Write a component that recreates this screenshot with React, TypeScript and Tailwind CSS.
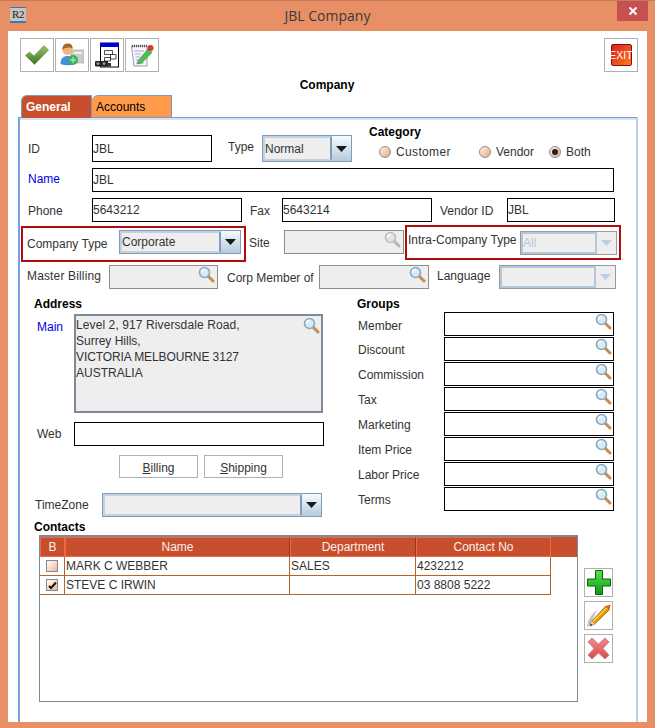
import type { ReactNode } from "react";

function Lens({ gray = false }: { gray?: boolean }) {
  return (
    <svg width="17" height="17" viewBox="0 0 17 17" className="block">
      <path d="M10 10 L15 15" stroke={gray ? "#b5b5b5" : "#c98a4a"} strokeWidth="3" strokeLinecap="round" />
      <circle cx="6.5" cy="6.5" r="5" fill={gray ? "#e4e4e4" : "#d5ebf8"} stroke={gray ? "#bdbdbd" : "#8aa7bb"} strokeWidth="1.6" />
      <path d="M3.5 6.5 A3 3 0 0 1 6.5 3.5" stroke="#fff" strokeWidth="1.3" fill="none" />
    </svg>
  );
}

function Field({ className, children, search }: { className: string; children?: ReactNode; search?: boolean }) {
  return (
    <div className={`relative flex items-center bg-white border border-black leading-none shrink-0 ${className}`}>
      {children}
      {search && (
        <span className="absolute right-px top-0">
          <Lens />
        </span>
      )}
    </div>
  );
}

function GrayField({ className, lens }: { className: string; lens: "gray" | "color" }) {
  return (
    <div className={`relative bg-[#eeeeee] border border-[#8e8e8e] shrink-0 ${className}`}>
      <span className="absolute right-[2px] top-0">
        <Lens gray={lens === "gray"} />
      </span>
    </div>
  );
}

function Combo({ className, text }: { className: string; text?: string }) {
  return (
    <div className={`flex bg-[#eeeeee] border border-[#7f9db9] shrink-0 ${className}`}>
      <div className="flex-1 flex items-center border-2 border-[#c3d2e2] border-r-[#7f9db9] text-[#333333]">{text}</div>
      <div className="w-[19px] flex items-center justify-center bg-gradient-to-b from-[#f7fafc] to-[#b5cbe0]">
        <svg width="11" height="6" viewBox="0 0 11 6">
          <path d="M0 0 H11 L5.5 6 Z" fill="#1a1a1a" />
        </svg>
      </div>
    </div>
  );
}

function DisabledCombo({ className, text }: { className: string; text?: string }) {
  return (
    <div className={`flex bg-[#eeeeee] shrink-0 border border-[#9a9a9a] ${className}`}>
      <div className="flex-1 flex items-center border-2 border-[#b4c8dc] text-[#b4c8e0]">{text}</div>
      <div className="w-[19px] flex items-center justify-center">
        <svg width="11" height="6" viewBox="0 0 11 6">
          <path d="M0 0 H11 L5.5 6 Z" fill="#b8cfe6" />
        </svg>
      </div>
    </div>
  );
}

function Radio({ on }: { on?: boolean }) {
  return (
    <span className="flex items-center justify-center w-[12px] h-[12px] rounded-full border border-[#7f8fa3] bg-gradient-to-br from-[#fdf3ea] to-[#eda673] shrink-0">
      {on && <span className="w-[6px] h-[6px] rounded-full bg-[#222222]" />}
    </span>
  );
}

function ToolButton({ children }: { children: ReactNode }) {
  return <div className="w-[34px] h-[34px] border border-[#b0b0b0] flex items-center justify-center bg-white shrink-0">{children}</div>;
}

function SideButton({ children }: { children: ReactNode }) {
  return <div className="w-[29px] h-[29px] border border-[#b0b0b0] flex items-center justify-center bg-white">{children}</div>;
}

function Check() {
  return (
    <svg width="24" height="20" viewBox="0 0 24 20">
      <defs>
        <linearGradient id="chk" x1="0" y1="0" x2="0" y2="1">
          <stop offset="0" stopColor="#9cc26a" />
          <stop offset="1" stopColor="#3f7424" />
        </linearGradient>
      </defs>
      <path d="M0.5 10.5 L4.5 7 L9 11 L19 0.5 L23.5 5 L9.5 19.5 Z" fill="url(#chk)" stroke="#5f8f3f" strokeWidth="0.6" />
    </svg>
  );
}

function Person() {
  return (
    <svg width="24" height="24" viewBox="0 0 24 24">
      <rect x="11" y="7" width="13" height="13" fill="#c9cfc6" stroke="#9aa098" strokeWidth="0.6" />
      <rect x="14" y="9" width="8" height="2" fill="#eef0ea" />
      <path d="M0.5 21 C0.5 15 4 13 7.5 13 C11 13 14.5 15 14.5 21 Q7.5 23.5 0.5 21 Z" fill="#3f93dc" />
      <circle cx="7.5" cy="7" r="5" fill="#f2b57a" />
      <path d="M2.5 7 C2 1.5 5.5 0.5 8 0.5 C11.5 0.5 13 3 12.5 6 C10.5 4 5.5 4 2.5 7 Z" fill="#a9662a" />
      <circle cx="13" cy="17" r="5" fill="#3fae5f" />
      <path d="M10 17 H16 M13 14 V20" stroke="#9be6b0" strokeWidth="1.4" />
    </svg>
  );
}

function Diagram() {
  return (
    <svg width="24" height="26" viewBox="0 0 24 26">
      <rect x="5.5" y="1" width="18" height="24" fill="#fff" stroke="#000" />
      <rect x="5" y="1" width="19" height="4" fill="#0000e6" />
      <path d="M9.5 8.5 H17.5 V12.5 H9.5 Z M15.5 12.5 H21 V17 H15.5 Z M9.5 15.5 H15.5 V19 H9.5 Z" fill="#fff" stroke="#222" strokeWidth="0.8" />
      <rect x="0" y="19" width="13" height="5.5" rx="1" fill="#1d1d1d" />
      <circle cx="3" cy="21.5" r="1.6" fill="#7f9a7f" />
      <circle cx="9" cy="21.5" r="1.6" fill="#7f9a7f" />
      <rect x="12" y="21" width="4" height="3.5" fill="#333" />
    </svg>
  );
}

function Notepad() {
  return (
    <svg width="24" height="24" viewBox="0 0 24 24">
      <path d="M1.5 3 H17 V23 H4 Z" fill="#f8f6fb" stroke="#8a7fa0" strokeWidth="0.8" />
      <path d="M2 3 H17" stroke="#555" strokeWidth="2.4" strokeDasharray="1 1" />
      <path d="M4.5 8 H14 M5 11 H11 M5.5 14 H10 M6 17 H10 M6 20 H14" stroke="#a9a6d8" strokeWidth="1" />
      <path d="M8 18 L18 6 L22 9.5 L11.5 20 L7.5 21 Z" fill="#4cc04a" stroke="#2f7d30" strokeWidth="0.6" />
      <circle cx="20.5" cy="5" r="3" fill="#d9363a" />
    </svg>
  );
}

function Exit() {
  return (
    <div className="w-[21px] h-[22px] rounded-[2px] border border-[#8c0c0c] bg-gradient-to-br from-[#d9231a] via-[#ee4a1d] to-[#fb7c1e] flex items-center justify-center text-white text-[10.5px] leading-none">
      EXIT
    </div>
  );
}

function Plus() {
  return (
    <svg width="24" height="25" viewBox="0 0 24 25">
      <defs>
        <linearGradient id="pls" x1="0" y1="0" x2="0" y2="1">
          <stop offset="0" stopColor="#5fe04d" />
          <stop offset="1" stopColor="#0a9a12" />
        </linearGradient>
      </defs>
      <path d="M8.5 0.5 H15.5 V9 H23.5 V16 H15.5 V24.5 H8.5 V16 H0.5 V9 H8.5 Z" fill="url(#pls)" stroke="#05640c" />
    </svg>
  );
}

function Pencil() {
  return (
    <svg width="25" height="25" viewBox="0 0 25 25">
      <path d="M1 24 C1 17 6 11 11 7 L4 22 Z" fill="#c4c4c4" />
      <path d="M4 23 L5.5 18.5 L20 3 L23.5 6.5 L8.5 21 Z" fill="#f59a00" stroke="#8f5a06" strokeWidth="0.9" />
      <path d="M7 18.5 L20.5 4.8" stroke="#ffd75a" strokeWidth="1.2" />
      <path d="M20 3 L23.5 6.5 L24.5 1.5 Z" fill="#e8562a" />
      <path d="M4 23 L5.5 18.5 L8.5 21 Z" fill="#f7dfba" />
      <path d="M4 23 L4.8 20.5 L6.5 22 Z" fill="#333" />
    </svg>
  );
}

function Cross() {
  return (
    <svg width="23" height="23" viewBox="0 0 23 23">
      <defs>
        <linearGradient id="crs" x1="0" y1="0" x2="0" y2="1">
          <stop offset="0" stopColor="#f28b8f" />
          <stop offset="1" stopColor="#e0444c" />
        </linearGradient>
      </defs>
      <path d="M5 1 L11.5 7 L18 1 L22 5 L16 11.5 L22 18 L18 22 L11.5 16 L5 22 L1 18 L7 11.5 L1 5 Z" fill="url(#crs)" stroke="#b8888a" strokeLinejoin="round" />
    </svg>
  );
}

function Box({ checked }: { checked?: boolean }) {
  return (
    <span className="flex items-center justify-center w-[12px] h-[12px] mx-auto border border-[#7f8a99] bg-gradient-to-br from-[#ffffff] to-[#f0b48c]">
      {checked && (
        <svg width="9" height="9" viewBox="0 0 9 9">
          <path d="M1 5 L3 7 L8 1.5" stroke="#111" strokeWidth="2" fill="none" />
        </svg>
      )}
    </span>
  );
}

const GROUPS = ["Member", "Discount", "Commission", "Tax", "Marketing", "Item Price", "Labor Price", "Terms"];

const CONTACTS = [
  { name: "MARK C WEBBER", dept: "SALES", phone: "4232212", checked: false },
  { name: "STEVE C IRWIN", dept: "", phone: "03 8808 5222", checked: true },
];

export default function App() {
  return (
    <div className="w-[655px] h-[728px] flex flex-col overflow-hidden bg-[#e98f66] border-t border-[#c27a5a] text-[12px] leading-[14px] text-[#333333] [font-family:'Liberation_Sans',Arial,sans-serif]">
      {/* Title bar */}
      <div className="h-[30px] shrink-0 grid grid-cols-[1fr_auto_1fr] items-start">
        <div className="pl-[10px] pt-[6px]">
          <div className="w-[16px] h-[16px] bg-[#c4c4c4] border-t border-b-2 border-[#3f76b8] text-[11px] leading-[13px] text-[#222222] text-center tracking-[-0.5px] [font-family:'Liberation_Serif',serif]">
            R2
          </div>
        </div>
        <div className="pt-[5px] text-[14px] leading-[20px] text-[#3a3a3a] [font-family:'Open_Sans',sans-serif]">JBL Company</div>
        <div className="flex justify-end pr-[7px]">
          <div className="w-[31px] h-[20px] bg-[#c75050] flex items-center justify-center">
            <svg width="10" height="10" viewBox="0 0 10 10">
              <path d="M1.5 1.5 L8.5 8.5 M8.5 1.5 L1.5 8.5" stroke="#fff" strokeWidth="2" />
            </svg>
          </div>
        </div>
      </div>

      {/* Window body */}
      <div className="flex-1 mx-[8px] mb-[6px] bg-white flex flex-col min-h-0 overflow-hidden">
        <div className="flex justify-between pl-[12px] pr-[9px] pt-[7px]">
          <div className="flex gap-px">
            <ToolButton><Check /></ToolButton>
            <ToolButton><Person /></ToolButton>
            <ToolButton><Diagram /></ToolButton>
            <ToolButton><Notepad /></ToolButton>
          </div>
          <ToolButton><Exit /></ToolButton>
        </div>

        <div className="mt-[6px] text-center font-bold text-black pr-[1px]">Company</div>

        {/* Tabs */}
        <div className="flex pl-[13px] mt-[3px] h-[22px] relative z-10">
          <div className="w-[71px] h-[23px] pl-[4px] pt-[4px] bg-[#c74f2d] border-t border-l border-r border-[#7c9ac6] rounded-tl-[6px] font-bold text-white">General</div>
          <div className="w-[80px] h-[22px] pl-[4px] pt-[4px] bg-[#ff9a4b] border-t border-r border-[#7c9ac6] rounded-tl-[6px] text-black">Accounts</div>
        </div>

        {/* Tab panel */}
        <div className="flex-1 ml-[10px] mr-[9px] flex flex-col border-l-2 border-r-[2px] border-l-[#7aa0e0] border-r-[#bad0e8] border-t border-t-[#7c9ac6] min-h-0">
          <div className="flex-1 border-t-[2px] border-[#d5e4f4] pt-[5px]">
            {/* ID / Type / Category */}
            <div className="flex items-start h-[37px] pl-[8px]">
              <div className="w-[64px] mt-[17px]">ID</div>
              <Field className="w-[120px] h-[27px] mt-[10px]">JBL</Field>
              <div className="w-[34px] ml-[16px] mt-[15px]">Type</div>
              <Combo className="w-[90px] h-[27px] mt-[10px]" text="Normal" />
              <div className="ml-[17px] flex flex-col">
                <div className="font-bold text-black">Category</div>
                <div className="flex items-center mt-[6px] pl-[10px]">
                  <Radio />
                  <span className="ml-[5px] w-[83px] tracking-[0.35px]">Customer</span>
                  <Radio />
                  <span className="ml-[5px] w-[53px]">Vendor</span>
                  <Radio on />
                  <span className="ml-[5px]">Both</span>
                </div>
              </div>
            </div>

            {/* Name */}
            <div className="flex items-center h-[24px] pl-[8px] mt-[6px]">
              <div className="w-[64px] text-[#0000e6] -mt-[2px]">Name</div>
              <Field className="w-[522px] h-[24px]">JBL</Field>
            </div>

            {/* Phone / Fax / Vendor */}
            <div className="flex items-center h-[24px] pl-[8px] mt-[6px]">
              <div className="w-[64px] mt-[2px]">Phone</div>
              <Field className="w-[150px] h-[24px]">5643212</Field>
              <div className="w-[32px] ml-[8px] mt-[2px]">Fax</div>
              <Field className="w-[150px] h-[24px]">5643214</Field>
              <div className="w-[67px] ml-[8px] mt-[2px]">Vendor ID</div>
              <Field className="w-[108px] h-[24px]">JBL</Field>
            </div>

            {/* Company type row */}
            <div className="flex items-start pl-px mt-[3px] h-[36px]">
              <div className="w-[225px] h-[36px] mt-px border-2 border-[#b00e0e] flex items-start pl-[4px] pt-[2px]">
                <span className="w-[92px] mt-[7px]">Company Type</span>
                <Combo className="w-[122px] h-[24px]" text="Corporate" />
              </div>
              <div className="w-[35px] ml-[3px] mt-[11px]">Site</div>
              <GrayField className="w-[120px] h-[24px] mt-[5px]" lens="gray" />
              <div className="w-[216px] h-[35px] ml-px border-2 border-[#b00e0e] flex items-start pl-px pt-[2px]">
                <span className="w-[112px] mt-[4px]">Intra-Company Type</span>
                <DisabledCombo className="w-[97px] h-[24px] mt-[2px]" text="All" />
              </div>
            </div>

            {/* Master billing row */}
            <div className="flex items-center pl-[7px] mt-[4px] h-[24px]">
              <div className="w-[82px] -mt-[2px] tracking-[0.15px]">Master Billing</div>
              <GrayField className="w-[109px] h-[24px]" lens="color" />
              <div className="w-[92px] ml-[9px] mt-px">Corp Member of</div>
              <GrayField className="w-[110px] h-[24px]" lens="color" />
              <div className="w-[62px] ml-[8px] -mt-[3px]">Language</div>
              <DisabledCombo className="w-[117px] h-[24px]" />
            </div>

            {/* Address and groups */}
            <div className="flex mt-[8px]">
              <div className="w-[323px] pl-[14px]">
                <div className="font-bold text-black">Address</div>
                <div className="flex mt-[3px]">
                  <div className="w-[40px] pl-[3px] pt-[6px] text-[#0000e6]">Main</div>
                  <div className="relative w-[249px] h-[99px] bg-[#eeeeee] border-2 border-[#7f8a99] pt-px leading-[16px]">
                    <span className="tracking-[0.1px]">Level 2, 917 Riversdale Road,</span>
                    <br />
                    Surrey Hills,
                    <br />
                    <span className="tracking-[-0.1px]">VICTORIA MELBOURNE 3127</span>
                    <br />
                    AUSTRALIA
                    <span className="absolute right-px top-px">
                      <Lens />
                    </span>
                  </div>
                </div>
                <div className="flex items-center mt-[9px]">
                  <div className="w-[40px] pl-[3px]">Web</div>
                  <Field className="w-[250px] h-[24px]" />
                </div>
                <div className="flex gap-[6px] mt-[9px] pl-[85px]">
                  <div className="w-[79px] h-[23px] border border-[#b0b0b0] flex items-center justify-center pt-[2px]">
                    <span><u>B</u>illing</span>
                  </div>
                  <div className="w-[79px] h-[23px] border border-[#b0b0b0] flex items-center justify-center pt-[2px]">
                    <span><u>S</u>hipping</span>
                  </div>
                </div>
                <div className="flex items-center mt-[15px]">
                  <div className="w-[68px] pl-px">TimeZone</div>
                  <Combo className="w-[220px] h-[24px]" />
                </div>
              </div>
              <div className="pl-[14px] flex-1">
                <div className="font-bold text-black">Groups</div>
                <div className="flex flex-col gap-px mt-px">
                  {GROUPS.map((g, i) => (
                    <div key={g} className="flex items-center h-[24px] pl-px">
                      <div className={`w-[86px] ${i === 0 ? "mt-[3px]" : "mt-px"}`}>{g}</div>
                      <Field className="w-[170px] h-[24px]" search />
                    </div>
                  ))}
                </div>
              </div>
            </div>

            {/* Contacts */}
            <div className="pl-[14px] mt-[3px] font-bold text-black">Contacts</div>
            <div className="flex items-start pl-[19px] mt-px">
              <div className="w-[539px] h-[167px] border border-t-2 border-[#7f8a99] bg-white">
                <div className="flex h-[20px] bg-[#c74f2d] text-[#fbeee8] text-center">
                  <div className="w-[25px] border border-[#f0683f] leading-[18px]">B</div>
                  <div className="w-[225px] border border-[#f0683f] border-r-[#8c3a20] leading-[18px]">Name</div>
                  <div className="w-[126px] border border-[#f0683f] border-r-[#8c3a20] leading-[18px]">Department</div>
                  <div className="w-[135px] border border-[#f0683f] leading-[18px]">Contact No</div>
                </div>
                {CONTACTS.map((c) => (
                  <div key={c.name} className="flex h-[19px] w-[511px] border-b border-[#b5652b] items-stretch">
                    <div className="w-[25px] border-r border-[#b5652b] flex items-center"><Box checked={c.checked} /></div>
                    <div className="w-[225px] border-r border-[#b5652b] pl-px leading-[18px]">{c.name}</div>
                    <div className="w-[126px] border-r border-[#b5652b] pl-px leading-[18px]">{c.dept}</div>
                    <div className="w-[135px] border-r border-[#b5652b] pl-px leading-[18px]">{c.phone}</div>
                  </div>
                ))}
              </div>
              <div className="flex flex-col gap-[4px] ml-[6px] mt-[33px]">
                <SideButton><Plus /></SideButton>
                <SideButton><Pencil /></SideButton>
                <SideButton><Cross /></SideButton>
              </div>
            </div>
          </div>
        </div>
      </div>
    </div>
  );
}
